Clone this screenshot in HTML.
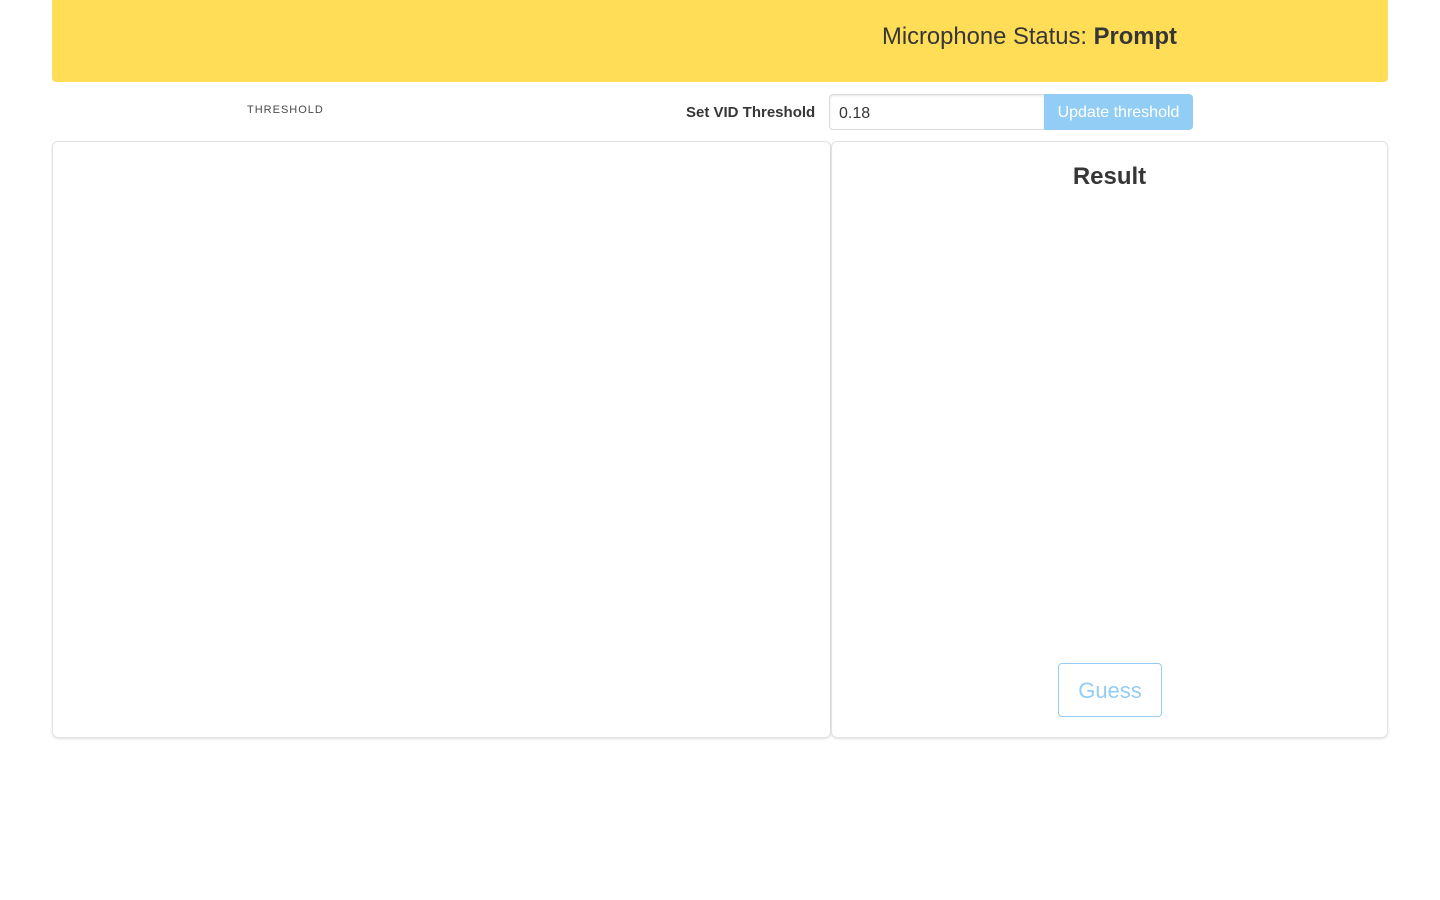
<!DOCTYPE html>
<html><head><meta charset="utf-8"><style>
*{box-sizing:border-box;margin:0;padding:0}
body{width:1440px;height:900px;background:#fff;font-family:"Liberation Sans",sans-serif;color:#333;position:relative;overflow:hidden}
.bar{position:absolute;left:52px;top:0;width:1336px;height:82px;background:#ffdd57;border-radius:0 0 4px 4px}
.status{position:absolute;left:882px;top:23px;font-size:23.8px;color:#363636;white-space:nowrap}
.status b{color:#363636}
.thr{position:absolute;left:247px;top:104px;font-size:11px;letter-spacing:1px;color:#4a4a4a}
.lbl{position:absolute;left:686px;top:104px;font-size:15px;font-weight:bold;color:#363636}
.inp{position:absolute;left:829px;top:94px;width:216px;height:36px;border:1px solid #dbdbdb;border-radius:4px 0 0 4px;box-shadow:inset 0 1px 2px rgba(10,10,10,.1);font-size:16px;padding:10px 9px;color:#363636}
.btn{position:absolute;left:1044px;top:94px;width:149px;height:36px;background:#92cdf5;border-radius:0 4px 4px 0;color:#fff;font-size:16px;text-align:center;line-height:37px}
.card{position:absolute;top:141px;height:597px;border:1px solid #e3e3e3;border-radius:6px;box-shadow:0 1px 2px rgba(10,10,10,.12)}
.c1{left:52px;width:779px}
.c2{left:831px;width:557px}
.res{position:absolute;left:0;right:0;top:21px;text-align:center;font-size:24px;font-weight:bold;color:#363636}
.guess{position:absolute;left:226px;top:521px;width:104px;height:54px;border:1px solid #92cdf5;border-radius:4px;color:#92cdf5;font-size:22px;text-align:center;line-height:54px}
</style></head><body>
<div class="bar"></div>
<div class="status">Microphone Status: <b>Prompt</b></div>
<div class="thr">THRESHOLD</div>
<div class="lbl">Set VID Threshold</div>
<div class="inp">0.18</div>
<div class="btn">Update threshold</div>
<div class="card c1"></div>
<div class="card c2"><div class="res">Result</div><div class="guess">Guess</div></div>
</body></html>
